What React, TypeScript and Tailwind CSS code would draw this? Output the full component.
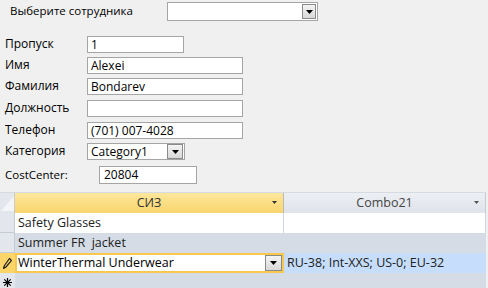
import React from "react";

const ui = { fontFamily: '"Open Sans", "Noto Sans", sans-serif' };

function DropBtn({ className = "" }: { className?: string }) {
  return (
    <div
      className={`flex items-center justify-center border border-[#8a8a8a] bg-gradient-to-b from-[#f4f4f4] to-[#d8d8d8] ${className}`}
    >
      <svg width="7" height="4" viewBox="0 0 7 4">
        <path d="M0 0h7L3.5 4z" fill="#000" />
      </svg>
    </div>
  );
}

function Field({ label, value, top, w, x = 87 }: { label: string; value: string; top: number; w: number; x?: number }) {
  return (
    <div className="relative h-[17px]" style={{ marginTop: top }}>
      <span className="absolute left-[5px] top-[-1px] text-[12px] leading-[17px] text-black">{label}</span>
      <div
        className="absolute top-0 h-[17px] border border-[#a5a5a5] bg-white pl-[3px] text-[12px] leading-[15px] text-black"
        style={{ left: x, width: w }}
      >
        {value}
      </div>
    </div>
  );
}

export default function App() {
  return (
    <div className="h-[288px] w-[488px] overflow-hidden bg-[#f0f0f0]" style={ui}>
      {/* top selector */}
      <div className="relative h-[21px] pt-[2px]">
        <span className="absolute left-[10px] top-[2px] text-[11.5px] leading-[17px]">Выберите сотрудника</span>
        <div className="absolute left-[167px] top-[2px] h-[19px] w-[151px] border border-[#a5a5a5] bg-white">
          <DropBtn className="absolute right-[1px] top-[1px] h-[15px] w-[14px]" />
        </div>
      </div>

      <Field label="Пропуск" value="1" top={15} w={97} />
      <Field label="Имя" value="Alexei" top={4} w={156} />
      <Field label="Фамилия" value="Bondarev" top={4} w={156} />
      <Field label="Должность" value="" top={5} w={156} />
      <Field label="Телефон" value="(701) 007-4028" top={5} w={156} />
      <div className="relative h-[17px]" style={{ marginTop: 4 }}>
        <span className="absolute left-[5px] top-[-1px] text-[12px] leading-[17px]">Категория</span>
        <div className="absolute left-[87px] top-0 h-[17px] w-[98px] border border-[#a5a5a5] bg-white pl-[3px] text-[12px] leading-[15px]">
          Category1
          <DropBtn className="absolute right-[1px] top-0 h-[15px] w-[16px]" />
        </div>
      </div>
      <div className="relative h-[18px]" style={{ marginTop: 6 }}>
        <span className="absolute left-[5px] top-0 text-[11.5px] leading-[17px]">CostCenter:</span>
        <div className="absolute left-[99px] top-0 h-[18px] w-[98px] border border-[#a5a5a5] bg-white pl-[4px] text-[12px] leading-[16px]">
          20804
        </div>
      </div>

      {/* datasheet */}
      <div className="mt-[8px] w-[486px] border-t border-[#d6dbe2] text-[12.5px] text-[#222]">
        <div className="flex h-[20px]">
          <div className="relative w-[15px] border-r border-[#c5cbd3] bg-[#e3e7ed]">
            <svg className="absolute left-0 top-0" width="15" height="20" viewBox="0 0 15 20">
              <path d="M14 3L14 18L1 18z" fill="#f3f5f8" />
            </svg>
          </div>
          <div className="relative flex w-[269px] items-center justify-center border-r border-[#b9b9b9] bg-gradient-to-b from-[#fde79c] to-[#f9d56c] text-[#333]">
            СИЗ
            <svg className="absolute right-[6px] top-[8px]" width="5" height="3" viewBox="0 0 5 3">
              <path d="M0 0h5L2.5 3z" fill="#333" />
            </svg>
          </div>
          <div className="relative flex w-[202px] items-center justify-center border-r border-[#c5cbd3] bg-gradient-to-b from-[#eceff3] to-[#dfe3ea] text-[#444]">
            Combo21
            <svg className="absolute right-[6px] top-[8px]" width="5" height="3" viewBox="0 0 5 3">
              <path d="M0 0h5L2.5 3z" fill="#555" />
            </svg>
          </div>
        </div>

        <div className="flex h-[20px] bg-white">
          <div className="w-[15px] border-r border-b border-[#c5cbd3] bg-[#e3e7ed]" />
          <div className="w-[269px] border-r border-[#d0d6de] pl-[3px] leading-[20px]">Safety Glasses</div>
          <div className="w-[202px] border-r border-[#d0d6de]" />
        </div>

        <div className="flex h-[20px] bg-[#d5dce6]">
          <div className="w-[15px] border-r border-b border-[#c5cbd3] bg-[#e3e7ed]" />
          <div className="w-[269px] pl-[3px] leading-[20px]">Summer FR&nbsp; jacket</div>
          <div className="w-[202px]" />
        </div>

        <div className="flex h-[20px]">
          <div className="flex w-[15px] items-center justify-center bg-[#fcd56a]">
            <svg width="9" height="11" viewBox="0 0 9 11">
              <path d="M6.5 0.5L8.5 2.5L3 9L0.5 10.5L1.5 7.5z" fill="none" stroke="#222" strokeWidth="1.2" />
              <path d="M1 8.5L2.5 10" stroke="#222" strokeWidth="1" />
            </svg>
          </div>
          <div className="relative w-[269px] border-2 border-[#f7c84b] bg-white pl-[1px] leading-[16px] text-black">
            WinterThermal Underwear
            <DropBtn className="absolute right-0 top-0 h-[16px] w-[17px] border-[#6d6d6d]" />
          </div>
          <div className="w-[202px] bg-[#c6defb] pl-[3px] leading-[20px]">RU-38; Int-XXS; US-0; EU-32</div>
        </div>

        <div className="flex h-[20px] bg-[#d5dce6]">
          <div className="flex w-[15px] justify-center bg-[#e3e7ed] pt-[5px]">
            <svg width="9" height="9" viewBox="0 0 9 9">
              <path d="M4.5 0V9M0 4.5H9M1.3 1.3L7.7 7.7M7.7 1.3L1.3 7.7" stroke="#000" strokeWidth="1.2" />
            </svg>
          </div>
          <div className="w-[269px]" />
          <div className="w-[202px]" />
        </div>
      </div>
    </div>
  );
}
